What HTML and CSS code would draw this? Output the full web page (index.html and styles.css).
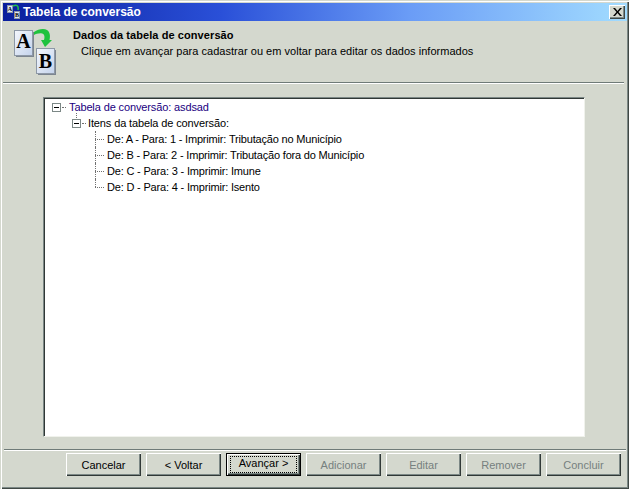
FILE: index.html
```html
<!DOCTYPE html>
<html lang="pt-BR">
<head>
<meta charset="utf-8">
<title>Tabela de conversão</title>
<link rel="stylesheet" href="styles.css">
</head>
<body>
<div class="window">
  <div class="titlebar">
    <svg class="title-icon" width="16" height="16" viewBox="0 0 16 16">
      <rect x="1.500" y="1.500" width="5" height="7" fill="#dfe8f5" stroke="#8a97a8"/>
      <text x="4" y="7" class="glyph-small">A</text>
      <rect x="8.500" y="7.500" width="5" height="7" fill="#dfe8f5" stroke="#8a97a8"/>
      <text x="11" y="13" class="glyph-small">B</text>
      <path d="M7 2 C10 0.500 13 1 12 6" fill="none" stroke="#22c24a" stroke-width="1.500"/>
    </svg>
    <span class="title-text">Tabela de conversão</span>
    <button class="close" aria-label="Fechar">
      <svg width="9" height="8" viewBox="0 0 9 8"><path d="M0 0h2l2.500 3 2.500-3h2L5.500 4 9 8H7L4.500 5 2 8H0l3.500-4z" fill="#000"/></svg>
    </button>
  </div>
  <header class="header">
    <svg class="logo" width="44" height="48" viewBox="0 0 44 48">
      <defs>
        <linearGradient id="page" x1="0" y1="0" x2="1" y2="1">
          <stop offset="0" stop-color="#f4f7fc"/>
          <stop offset="1" stop-color="#c4d3ec"/>
        </linearGradient>
      </defs>
      <rect x="0.500" y="2.500" width="18" height="25" fill="url(#page)" stroke="#8d98a6"/>
      <path d="M19.500 4v25M2 28.500h18" stroke="#7c8590" stroke-width="1" fill="none"/>
      <text x="9.500" y="20" class="glyph">A</text>
      <rect x="22.500" y="20.500" width="18" height="25" fill="url(#page)" stroke="#8d98a6"/>
      <path d="M41.500 22v25M24 46.500h18" stroke="#7c8590" stroke-width="1" fill="none"/>
      <text x="31.500" y="40" class="glyph">B</text>
      <path d="M20 4 C24 1 30 0 33 2 C36 4 36.500 8 35.500 12 L38 12 L31 19 L27 12 L30 12 C31 9 30.500 6 28 5.500 C25 5 22 6 20 7 Z" fill="#1fc23e"/>
    </svg>
    <div class="header-text">
      <div class="header-title">Dados da tabela de conversão</div>
      <div class="header-sub">Clique em avançar para cadastrar ou em voltar para editar os dados informados</div>
    </div>
  </header>
  <main class="content">
    <div class="tree">
      <div class="row root">
        <span class="toggle"></span><span class="dash"></span><span class="label root-label">Tabela de conversão: asdsad</span>
      </div>
      <div class="row level1">
        <span class="toggle"></span><span class="dash"></span><span class="label">Itens da tabela de conversão:</span>
      </div>
      <ul class="leaves">
        <li class="leaf"><span class="leaf-dash"></span><span class="label">De: A - Para: 1 - Imprimir: Tributação no Município</span></li>
        <li class="leaf"><span class="leaf-dash"></span><span class="label">De: B - Para: 2 - Imprimir: Tributação fora do Município</span></li>
        <li class="leaf"><span class="leaf-dash"></span><span class="label">De: C - Para: 3 - Imprimir: Imune</span></li>
        <li class="leaf"><span class="leaf-dash"></span><span class="label">De: D - Para: 4 - Imprimir: Isento</span></li>
      </ul>
    </div>
  </main>
  <footer class="footer">
    <button class="btn">Cancelar</button>
    <button class="btn">&lt; Voltar</button>
    <button class="btn default"><span class="focus">Avançar &gt;</span></button>
    <button class="btn" disabled>Adicionar</button>
    <button class="btn" disabled>Editar</button>
    <button class="btn" disabled>Remover</button>
    <button class="btn" disabled>Concluir</button>
  </footer>
</div>
</body>
</html>
```
FILE: styles.css
```css
* { box-sizing: border-box; }
html, body { margin: 0; height: 100%; overflow: hidden; }
body {
  font-family: "Liberation Sans", Arial, sans-serif;
  font-size: 11px;
  color: #000;
  background: #d4d8ce;
}
.window {
  height: 489px;
  display: flex;
  flex-direction: column;
  padding: 3px 2px 2px 3px;
  background: #d4d8ce;
  box-shadow: inset 1px 1px 0 #d4d8ce, inset 2px 2px 0 #fff, inset -1px -1px 0 #404844, inset -2px -2px 0 #7c8886;
}
.titlebar {
  height: 18px;
  flex: none;
  display: flex;
  align-items: center;
  padding: 0 2px 0 3px;
  background: linear-gradient(90deg, #0a1f9c 0%, #2a50d8 35%, #6a9cf6 65%, #a2dcff 100%);
}
.title-icon { flex: none; }
.glyph-small { font: bold 6px "Liberation Serif", serif; fill: #000; text-anchor: middle; }
.title-text {
  margin-left: 1px;
  flex: 1;
  color: #fff;
  font-weight: bold;
  font-size: 12px;
}
.close {
  width: 16px;
  height: 14px;
  padding: 0;
  display: flex;
  align-items: center;
  justify-content: center;
  background: #d4d8ce;
  border: none;
  box-shadow: inset 1px 1px 0 #fff, inset -1px -1px 0 #404844, inset -2px -2px 0 #7c8886;
}
.header {
  height: 63px;
  flex: none;
  display: flex;
  padding: 7px 0 0 11px;
  margin-right: 3px;
  border-bottom: 1px solid #fff;
  box-shadow: inset 0 -1px 0 #6f7b78;
}
.logo { flex: none; }
.glyph { font: bold 20px "Liberation Serif", serif; fill: #000; text-anchor: middle; }
.header-text { margin-left: 15px; padding-top: 1px; }
.header-title { font-weight: bold; line-height: 13px; letter-spacing: 0.08px; }
.header-sub { margin: 3px 0 0 8px; line-height: 13px; letter-spacing: 0.03px; }
.content {
  flex: 1;
  padding: 13px 42px 12px 40px;
  min-height: 0;
}
.tree {
  height: 100%;
  background: #fff;
  border: 1px solid;
  border-color: #7c8886 #f0f2ec #f0f2ec #7c8886;
  box-shadow: inset 1px 1px 0 #303836;
  padding: 1px 0 0 8px;
  letter-spacing: -0.12px;
}
.row, .leaf { display: flex; align-items: center; height: 16px; }
.toggle {
  width: 9px;
  height: 9px;
  flex: none;
  border: 1px solid #7c8886;
  background: linear-gradient(#000, #000) center / 5px 1px no-repeat #fff;
}
.dash { width: 4px; border-top: 1px dotted #707070; margin: 0 2px 0 1px; flex: none; }
.root .dash { margin-right: 3px; }
.root-label { color: #1a0080; }
.level1 { margin-left: 20px; position: relative; }
.level1::before {
  content: "";
  position: absolute;
  left: 4px;
  top: -2px;
  height: 5px;
  border-left: 1px dotted #707070;
}
.leaves {
  list-style: none;
  margin: 0 0 0 43px;
  padding: 0;
  letter-spacing: -0.18px;
}
.leaf { position: relative; }
.leaf::before {
  content: "";
  position: absolute;
  left: 0;
  top: 0;
  height: 16px;
  border-left: 1px dotted #707070;
}
.leaf:last-child::before { height: 8px; }
.leaf-dash { width: 9px; border-top: 1px dotted #707070; margin-right: 3px; flex: none; }
.label { white-space: nowrap; }
.footer {
  flex: none;
  height: 38px;
  display: flex;
  gap: 5px;
  justify-content: flex-end;
  padding: 3px 5px 0 0;
  border-top: 1px solid #6f7b78;
  box-shadow: inset 0 1px 0 #fff;
  margin: 0 1px;
}
.btn {
  width: 75px;
  height: 23px;
  padding: 0;
  font: inherit;
  color: #000;
  background: #d4d8ce;
  border: none;
  box-shadow: inset 1px 1px 0 #fff, inset -1px -1px 0 #303836, inset -2px -2px 0 #7c8886;
  display: flex;
  align-items: center;
  justify-content: center;
}
.btn:disabled { color: #76807e; }
.btn.default {
  box-shadow: inset 0 0 0 1px #000, inset 2px 2px 0 #fff, inset -2px -2px 0 #303836, inset -3px -3px 0 #7c8886;
}
.focus {
  width: 65px;
  height: 15px;
  line-height: 13px;
  text-align: center;
  outline: 1px dotted #000;
}
```
